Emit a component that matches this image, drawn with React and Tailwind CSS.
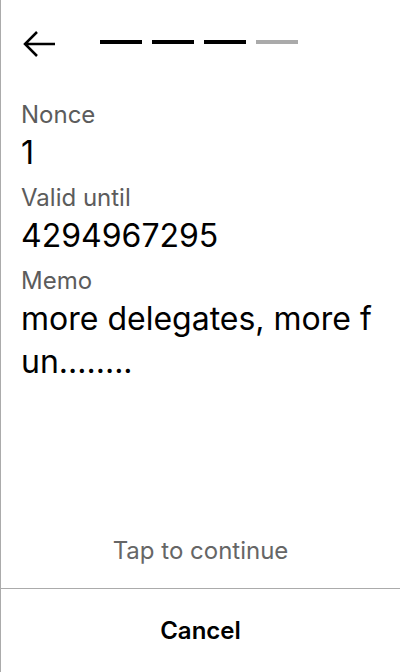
export default function App() {
  const steps = [true, true, true, false];

  return (
    <div className="w-[400px] h-[672px] bg-white border-l border-[#ababab] flex flex-col font-['Inter',sans-serif] text-black">
      {/* header */}
      <div className="h-[86px] flex items-center pl-[21px]">
        <svg width="34" height="28" viewBox="0 0 34 28" className="mt-[1px]">
          <path d="M33 14H3M15 2L3 14L15 26" fill="none" stroke="black" strokeWidth="2.5" />
        </svg>
        <div className="flex gap-[10px] ml-[44px] -mt-[2px]">
          {steps.map((done, i) => (
            <div key={i} className={done ? 'w-[42px] h-[4px] bg-black' : 'w-[42px] h-[4px] bg-[#aaaaaa]'} />
          ))}
        </div>
      </div>

      {/* fields */}
      <div className="px-[20px] pt-[13px] flex-1">
        <div className="text-[24px] leading-[32px] text-[#5c5c5c]">Nonce</div>
        <div className="text-[32px] leading-[44px] mb-[7px]">1</div>
        <div className="text-[24px] leading-[32px] text-[#5c5c5c]">Valid until</div>
        <div className="text-[32px] leading-[44px] mb-[7px]">4294967295</div>
        <div className="text-[24px] leading-[32px] text-[#5c5c5c]">Memo</div>
        <div className="text-[32px] leading-[43px] break-all">more delegates, more fun........</div>
      </div>

      <div className="text-center text-[24px] leading-[32px] text-[#666666] pb-[21px]">Tap to continue</div>

      <div className="border-t border-[#ababab] h-[84px] flex items-center justify-center">
        <span className="text-[24px] font-semibold">Cancel</span>
      </div>
    </div>
  );
}
